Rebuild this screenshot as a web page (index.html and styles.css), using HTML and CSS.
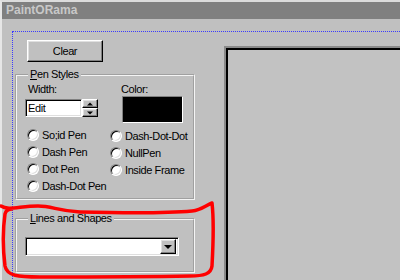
FILE: index.html
```html
<!DOCTYPE html>
<html lang="en">
<head>
  <meta charset="UTF-8" />
  <title>PaintORama</title>
  <link rel="stylesheet" href="styles.css">
</head>
<body>
  <div class="window">
    <div class="titlebar">PaintORama</div>

    <div class="client">
      <div class="focus">
        <div class="panel">
          <button class="btn clear">Clear</button>

          <fieldset class="group pens">
            <legend><u>P</u>en Styles</legend>
            <div class="top-row">
              <div class="col-width">
                <div class="label">Width:</div>
                <div class="spin">
                  <div class="field edit">Edit</div>
                  <div class="spin-btns">
                    <div class="btn arrow up"></div>
                    <div class="btn arrow down"></div>
                  </div>
                </div>
              </div>
              <div class="col-color">
                <div class="label">Color:</div>
                <div class="swatch"></div>
              </div>
            </div>

            <div class="radios">
              <div class="radio-col">
                <div class="radio"><span class="dot"></span>So;id Pen</div>
                <div class="radio"><span class="dot"></span>Dash Pen</div>
                <div class="radio"><span class="dot"></span>Dot Pen</div>
                <div class="radio"><span class="dot"></span>Dash-Dot Pen</div>
              </div>
              <div class="radio-col second">
                <div class="radio"><span class="dot"></span>Dash-Dot-Dot</div>
                <div class="radio"><span class="dot"></span>NullPen</div>
                <div class="radio"><span class="dot"></span>Inside Frame</div>
              </div>
            </div>
          </fieldset>

          <fieldset class="group shapes">
            <legend><u>L</u>ines and Shapes</legend>
            <div class="field combo">
              <div class="btn arrow drop"></div>
            </div>
          </fieldset>
        </div>

        <div class="canvas"></div>
      </div>
    </div>
  </div>

  <!-- red marker scribble drawn over the screenshot -->
  <svg class="scribble" width="400" height="280" viewBox="0 0 400 280">
    <path d="M1 206 C 8 211, 20 206, 38 206 C 52 206, 58 211, 80 212 C 120 213, 170 213, 192 211 C 202 210, 206 205, 212 203 C 214 220, 213 248, 212 266 C 211 274, 204 276, 190 276 C 140 277, 80 277, 40 277 C 18 277, 7 276, 5 266 C 3 250, 3 228, 5 214 C 6 210, 9 209, 12 209"
          fill="none" stroke="#ff0000" stroke-width="3.5" stroke-linecap="round" stroke-linejoin="round"/>
  </svg>
</body>
</html>
```

FILE: styles.css
```css
* {
  box-sizing: border-box;
}

body {
  margin: 0;
  width: 400px;
  height: 280px;
  overflow: hidden;
  background: #c0c0c0;
  font-family: "Liberation Sans", Arial, sans-serif;
  font-size: 11px;
  letter-spacing: -0.4px;
  color: #000;
  position: relative;
}

.window {
  border-top: 2px solid #dcdcdc;
  border-left: 2px solid #e6e6e6;
  height: 280px;
  overflow: hidden;
}

.titlebar {
  height: 17px;
  line-height: 17px;
  padding-left: 4px;
  background: #808080;
  color: #c8c8c8;
  font-size: 12px;
  font-weight: bold;
  letter-spacing: 0;
}

.client {
  padding: 12px 0 0 10px;
}

.focus {
  display: flex;
  align-items: flex-start;
  border-top: 1px dotted #3a3aff;
  border-left: 1px dotted #3a3aff;
  height: 248px;
}

.panel {
  width: 180px;
  margin-left: 2px;
  padding-top: 8px;
  flex-shrink: 0;
}

/* raised 3d look */
.btn {
  background: #c0c0c0;
  border: 1px solid;
  border-color: #fff #000 #000 #fff;
  box-shadow: inset -1px -1px #808080, inset 1px 1px #dfdfdf;
}

/* sunken 3d look */
.field {
  background: #fff;
  border: 1px solid;
  border-color: #808080 #fff #fff #808080;
  box-shadow: inset 1px 1px #000, inset -1px -1px #dfdfdf;
}

.clear {
  display: block;
  margin-left: 12px;
  width: 76px;
  height: 22px;
  padding: 0;
  font-family: inherit;
  font-size: 11px;
  letter-spacing: -0.4px;
  color: #000;
}

.group {
  margin: 6px 0 0;
  padding: 0;
  min-width: 0;
  border: 2px groove #f4f4f4;
}

.group legend {
  margin-left: 3px;
  padding: 0 2px;
  line-height: 13px;
}

.pens {
  padding: 2px 0 4px 8px;
}

.top-row {
  display: flex;
}

.label {
  line-height: 13px;
}

.col-width .label {
  padding-left: 3px;
}

.spin {
  display: flex;
  margin-top: 3px;
}

.edit {
  width: 57px;
  height: 18px;
  line-height: 16px;
  padding-left: 2px;
}

.spin-btns {
  display: flex;
  flex-direction: column;
}

.arrow {
  position: relative;
  width: 16px;
  height: 9px;
}

.arrow::after {
  content: "";
  position: absolute;
  left: 50%;
  top: 50%;
  transform: translate(-50%, -50%);
  border-left: 3px solid transparent;
  border-right: 3px solid transparent;
}

.up::after {
  border-bottom: 3px solid #000;
}

.down::after {
  border-top: 3px solid #000;
}

.col-color {
  margin-left: 24px;
}

.col-color .label {
  margin-left: -1px;
}

.swatch {
  width: 61px;
  height: 27px;
  background: #000;
  border: 1px solid;
  border-color: #808080 #fff #fff #808080;
}

.radios {
  display: flex;
  margin: 3px 0 0 2px;
}

.radio-col {
  width: 87px;
}

.radio-col.second {
  padding-top: 1px;
}

.radio {
  display: flex;
  align-items: center;
  gap: 3px;
  height: 17px;
}

.dot {
  width: 12px;
  height: 12px;
  border-radius: 50%;
  background: #fff;
  border: 1px solid;
  border-color: #808080 #fff #fff #808080;
  box-shadow: inset 1px 1px #000, inset -1px -1px #dfdfdf;
  flex-shrink: 0;
}

.shapes {
  margin-top: 12px;
  padding: 12px 0 15px 8px;
}

.combo {
  display: flex;
  justify-content: flex-end;
  align-items: center;
  width: 154px;
  height: 19px;
  padding: 2px;
}

.drop {
  width: 16px;
  height: 15px;
}

.drop::after {
  border-left-width: 4px;
  border-right-width: 4px;
  border-top: 4px solid #000;
}

.canvas {
  flex-shrink: 0;
  width: 200px;
  height: 234px;
  margin: 14px 0 0 29px;
  border-top: 2px solid #8a8a8a;
  border-left: 2px solid #8a8a8a;
  box-shadow: inset 2px 2px #000;
  background: #c2c2c2;
}

.scribble {
  position: absolute;
  left: 0;
  top: 0;
  pointer-events: none;
}
```
